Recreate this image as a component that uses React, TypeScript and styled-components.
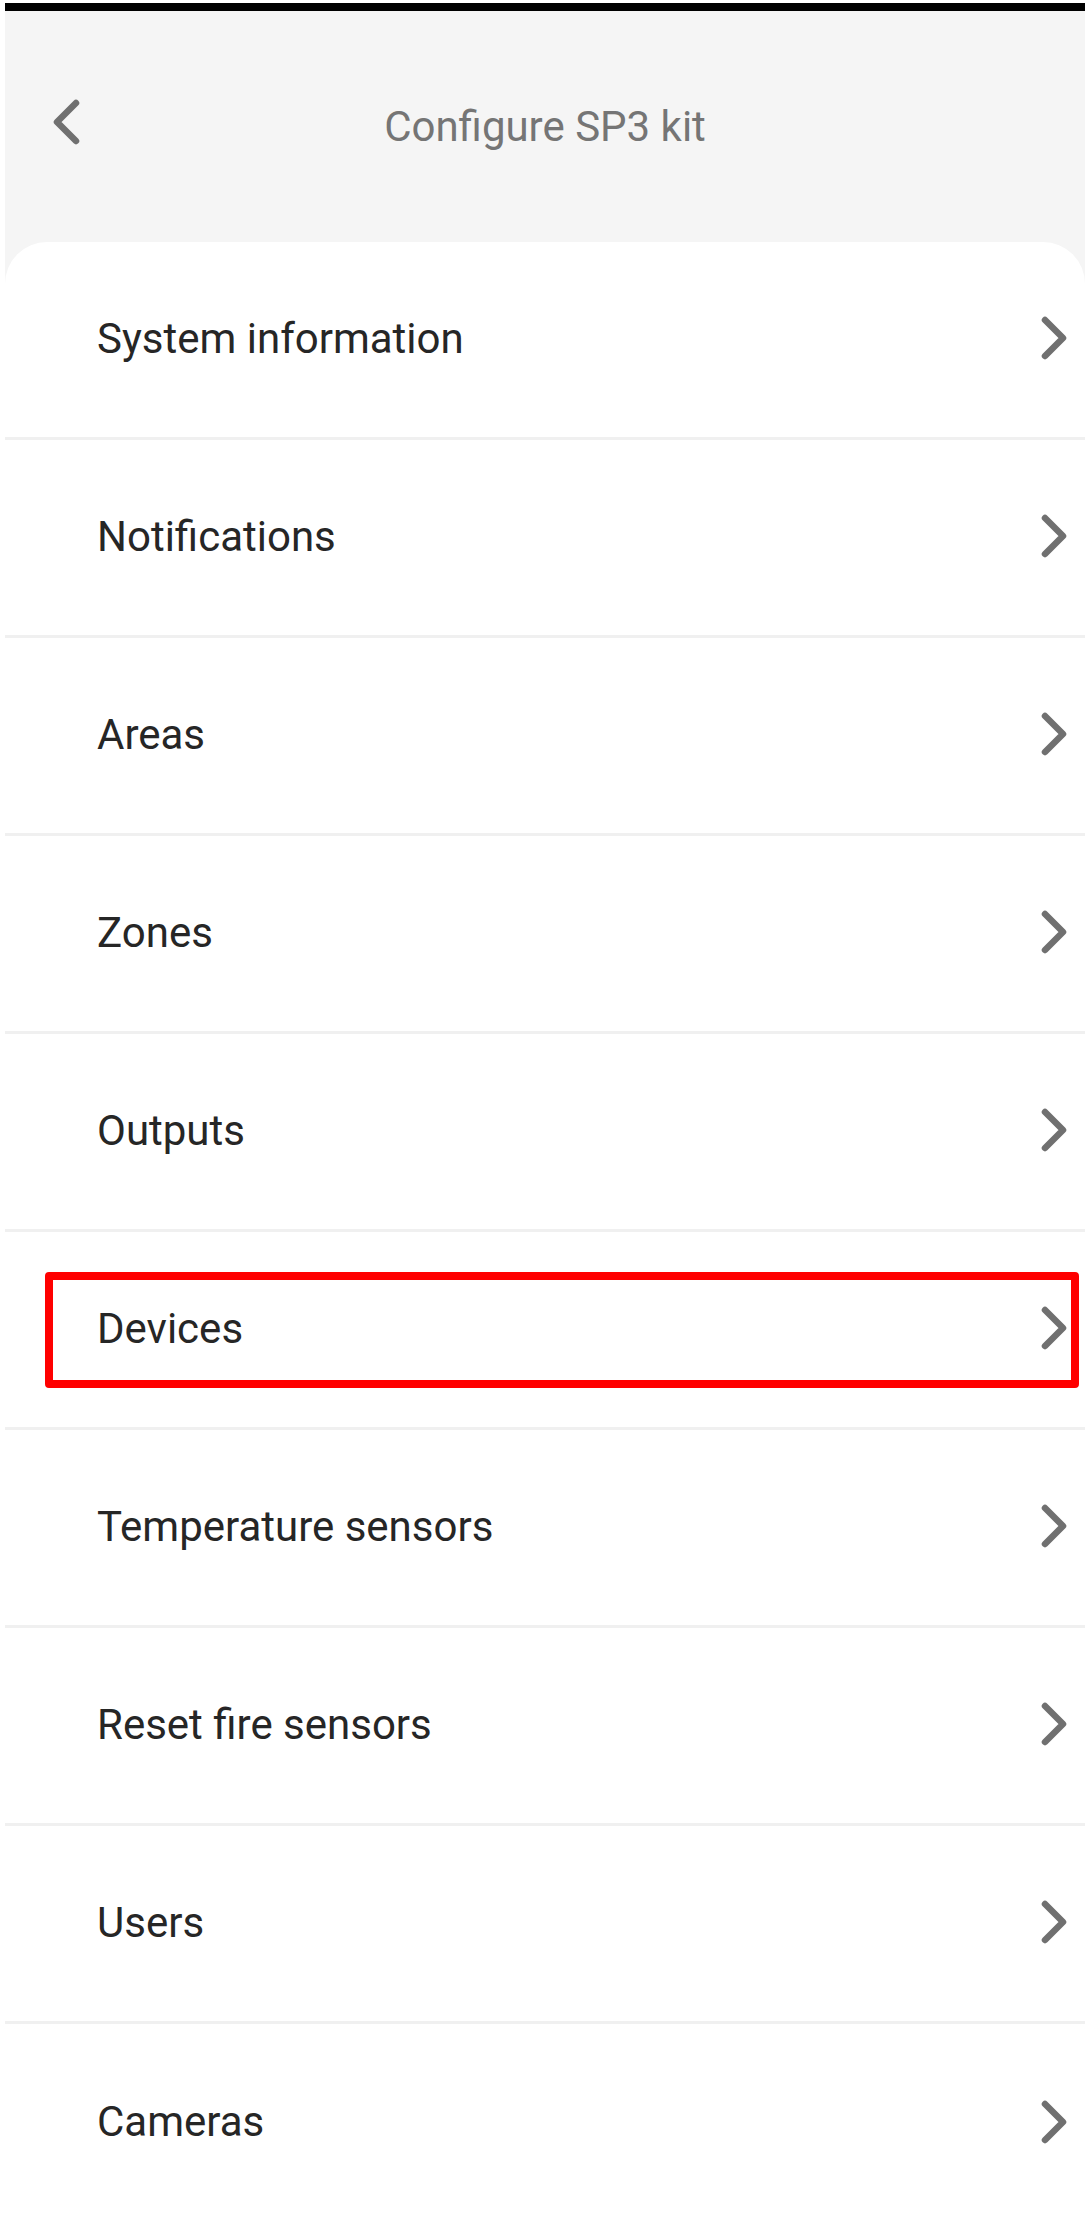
import styled, { createGlobalStyle } from "styled-components";

const GlobalStyle = createGlobalStyle`
  html, body {
    margin: 0;
    padding: 0;
    background: #ffffff;
  }
  body {
    font-family: Roboto, "Noto Sans", "Liberation Sans", sans-serif;
  }
`;

const Page = styled.div`
  padding: 3px 5px 0;
  min-height: 2222px;
  box-sizing: border-box;
`;

const Frame = styled.div`
  background: #f5f5f5;
  display: flex;
  flex-direction: column;
`;

const StatusBar = styled.div`
  height: 8px;
  background: #000000;
`;

const Header = styled.header`
  height: 231px;
  display: grid;
  grid-template-columns: 1fr auto 1fr;
  align-items: center;
`;

const BackButton = styled.button`
  justify-self: start;
  margin: 0 0 10px 47px;
  padding: 0;
  border: none;
  background: none;
  display: flex;
  cursor: pointer;
`;

const Title = styled.h1`
  margin: 0;
  font-size: 42px;
  font-weight: 400;
  color: #757575;
`;

const Card = styled.ul`
  margin: 0;
  padding: 0;
  list-style: none;
  background: #ffffff;
  border-radius: 42px 42px 0 0;
`;

const Row = styled.li<{ $highlighted?: boolean }>`
  position: relative;
  box-sizing: border-box;
  height: 198px;
  display: flex;
  align-items: center;
  justify-content: space-between;
  padding: 0 18px 3px 92px;
  border-bottom: 3px solid #f0f0f0;
  cursor: pointer;

  &:last-child {
    border-bottom: none;
  }

  ${({ $highlighted }) =>
    $highlighted &&
    `
    &::after {
      content: "";
      position: absolute;
      top: 40px;
      bottom: 39px;
      left: 40px;
      right: 6px;
      border: 8px solid #ff0000;
      border-radius: 4px;
    }
  `}
`;

const Label = styled.span`
  font-size: 42px;
  color: #262626;
`;

const Chevron = styled.svg`
  width: 26px;
  height: 44px;
  flex-shrink: 0;
`;

const items = [
  "System information",
  "Notifications",
  "Areas",
  "Zones",
  "Outputs",
  "Devices",
  "Temperature sensors",
  "Reset fire sensors",
  "Users",
  "Cameras",
];

export default function App() {
  return (
    <>
      <GlobalStyle />
      <Page>
        <Frame>
          <StatusBar />
          <Header>
            <BackButton aria-label="Back">
              <svg width="28" height="46" viewBox="0 0 28 46">
                <path
                  d="M24 4 L5 23 L24 42"
                  fill="none"
                  stroke="#707070"
                  strokeWidth="6.5"
                  strokeLinecap="round"
                  strokeLinejoin="round"
                />
              </svg>
            </BackButton>
            <Title>Configure SP3 kit</Title>
          </Header>
          <Card>
            {items.map((item) => (
              <Row key={item} $highlighted={item === "Devices"}>
                <Label>{item}</Label>
                <Chevron viewBox="0 0 26 44">
                  <path
                    d="M4 4 L22 22 L4 40"
                    fill="none"
                    stroke="#707070"
                    strokeWidth="6.5"
                    strokeLinecap="round"
                    strokeLinejoin="round"
                  />
                </Chevron>
              </Row>
            ))}
          </Card>
        </Frame>
      </Page>
    </>
  );
}
